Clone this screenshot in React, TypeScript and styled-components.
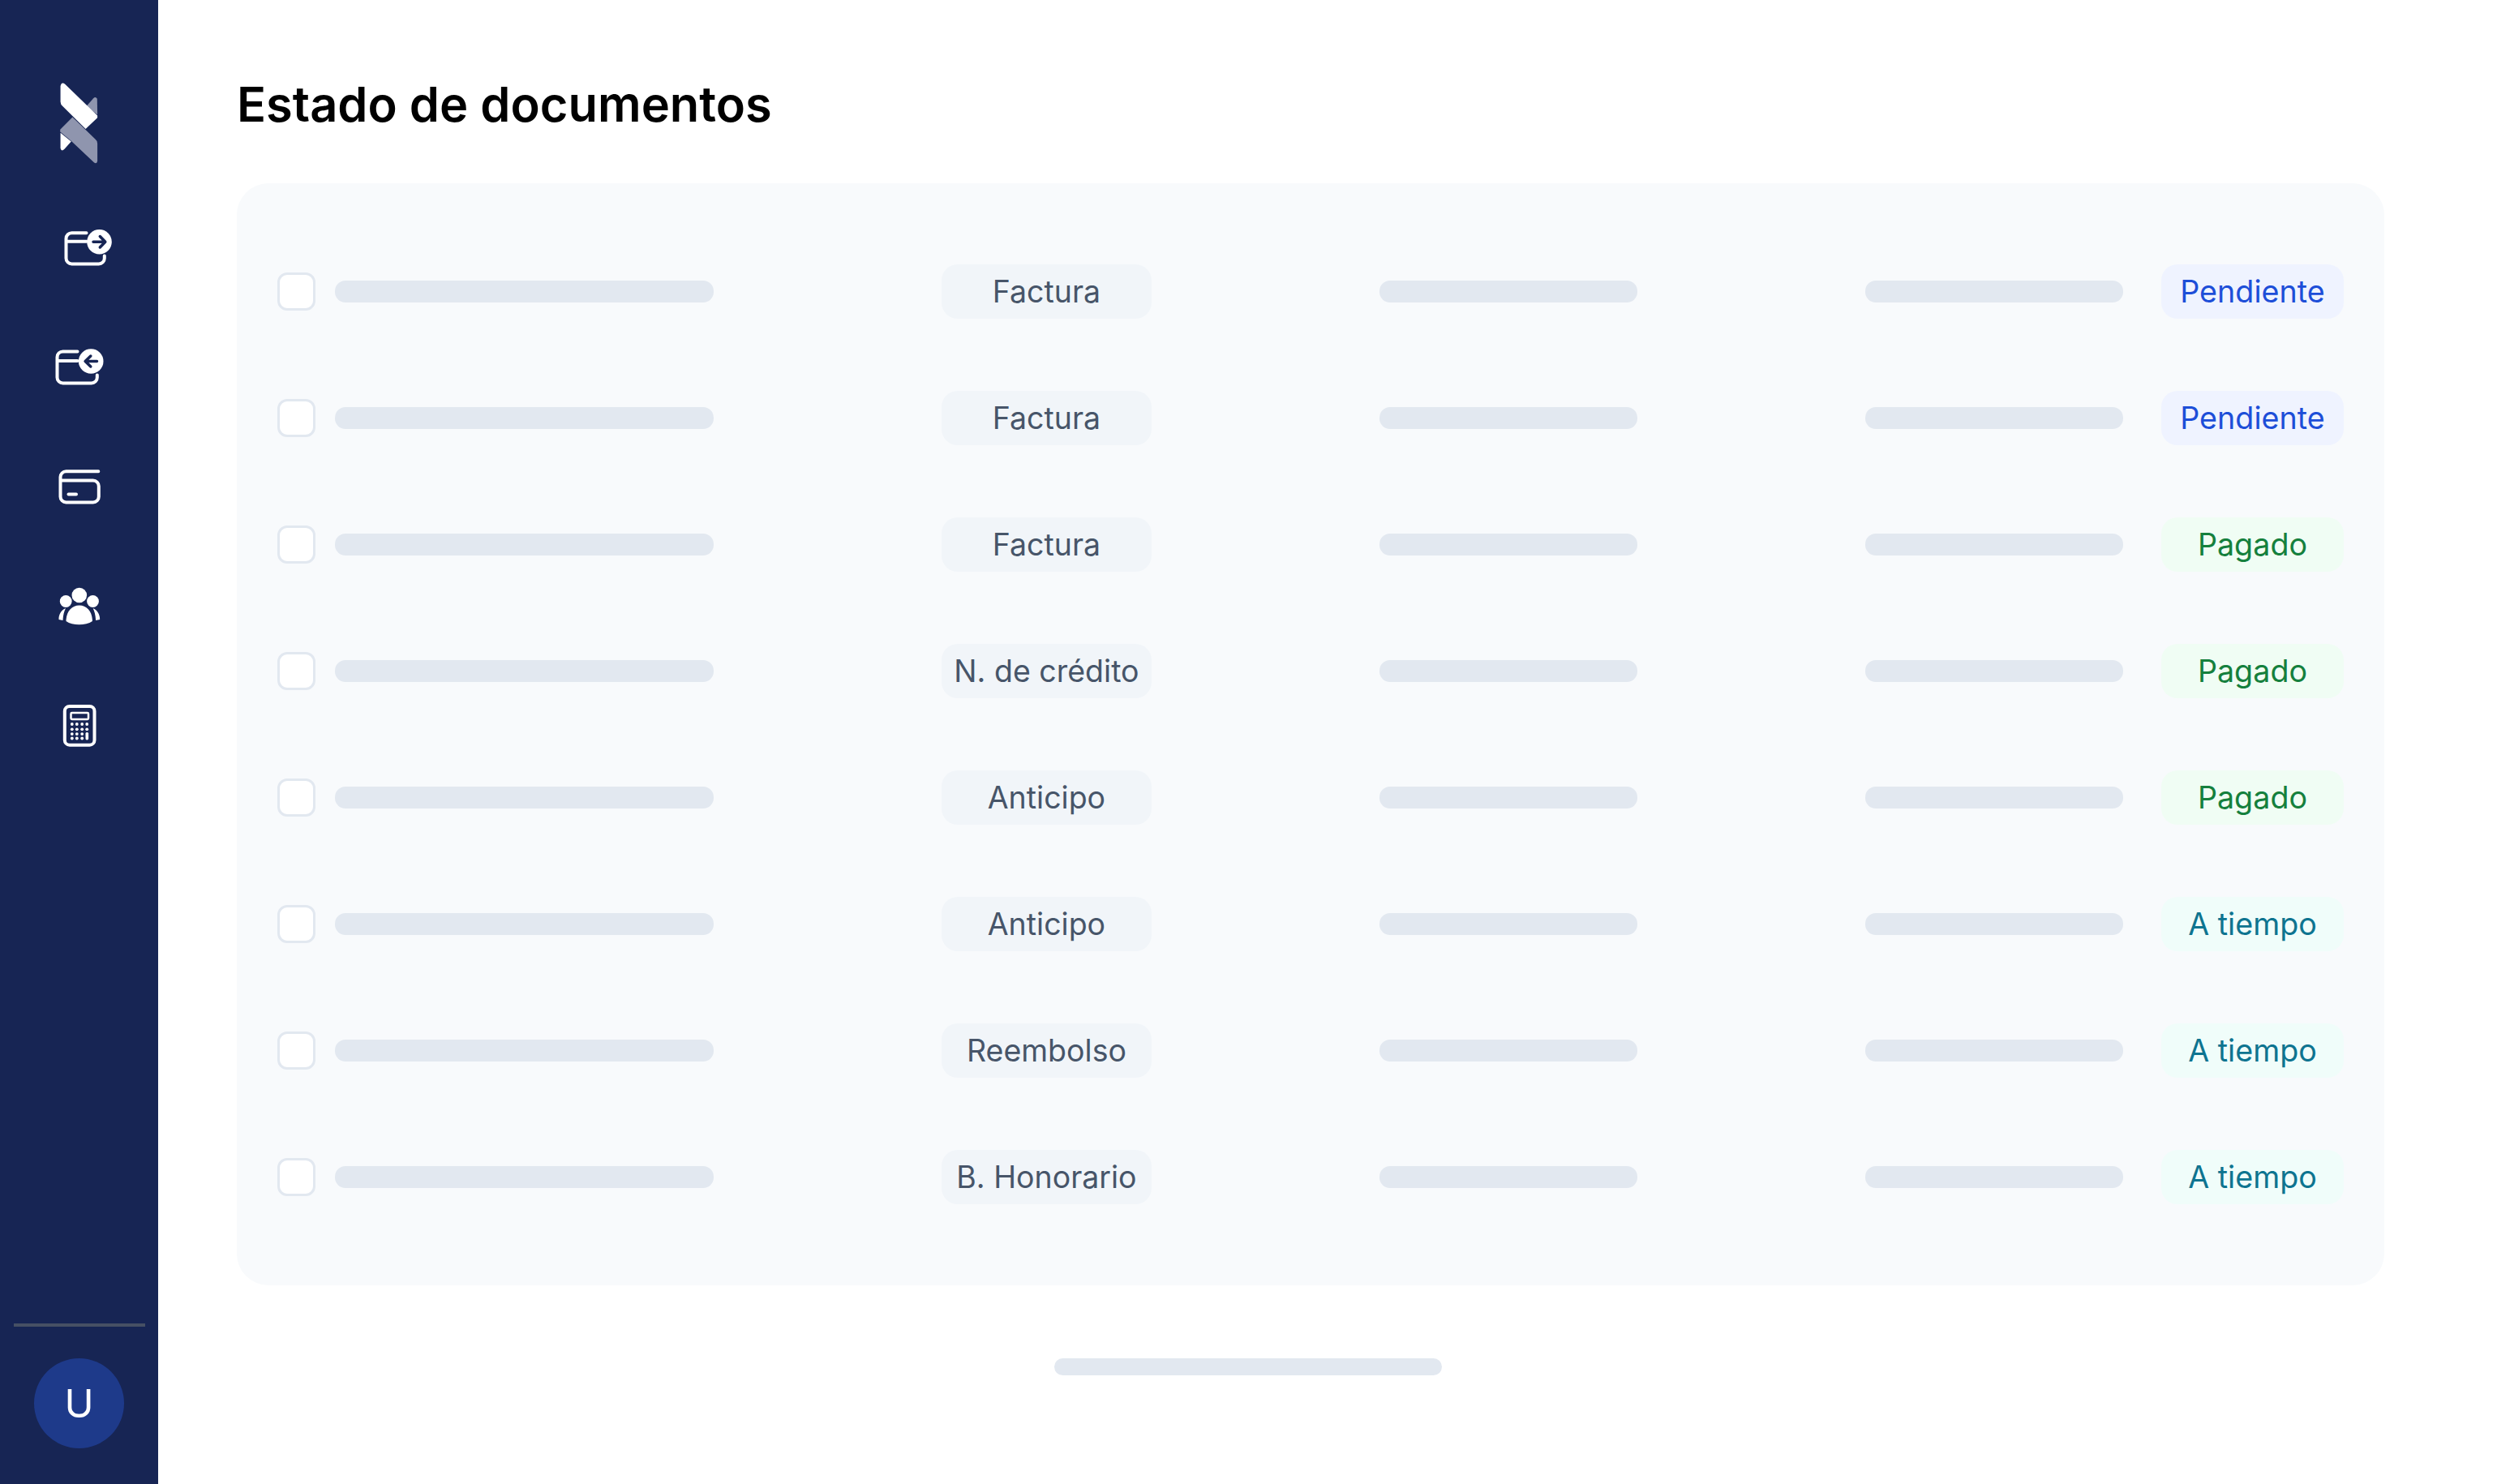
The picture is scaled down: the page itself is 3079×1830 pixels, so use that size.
import React from "react";
import styled, { createGlobalStyle } from "styled-components";

const Global = createGlobalStyle`
  html, body { margin: 0; padding: 0; background: #ffffff; }
  body { font-family: Inter, "Liberation Sans", sans-serif; }
`;

const Shell = styled.div`
  display: flex;
  width: 3079px;
  height: 1830px;
  overflow: hidden;
  background: #ffffff;
`;

const Sidebar = styled.aside`
  flex: 0 0 195px;
  display: flex;
  flex-direction: column;
  align-items: center;
  padding: 102px 0 44px;
  box-sizing: border-box;
  background: #172554;
`;

const Logo = styled.svg`
  display: block;
  width: 47px;
  height: 100px;
  margin-bottom: 70.5px;
`;

const Nav = styled.nav`
  display: flex;
  flex-direction: column;
  gap: 83.5px;
`;

const NavIcon = styled.svg`
  display: block;
  width: 80px;
  height: 64px;
`;

const SideFooter = styled.div`
  margin-top: auto;
  align-self: stretch;
  display: flex;
  flex-direction: column;
  align-items: center;
  gap: 39px;
`;

const Divider = styled.div`
  width: 162px;
  height: 4px;
  background: #465064;
`;

const Avatar = styled.div`
  width: 111px;
  height: 111px;
  border-radius: 50%;
  display: flex;
  align-items: center;
  justify-content: center;
  background: #1e3a8a;
  color: #ffffff;
  font-size: 48.5px;
  font-weight: 400;
`;

const Main = styled.main`
  flex: 1;
  min-width: 0;
  padding: 92px 139px 0 97px;
  box-sizing: border-box;
`;

const Title = styled.h1`
  margin: 0 0 62px;
  font-size: 59.6px;
  line-height: 72px;
  font-weight: 600;
  color: #000000;
`;

const Card = styled.section`
  display: flex;
  flex-direction: column;
  gap: 89px;
  padding: 100px 50px;
  border-radius: 39px;
  background: #f8fafc;
`;

const Row = styled.div`
  display: flex;
  align-items: center;
  justify-content: space-between;
  height: 67px;
`;

const Group = styled.div<{ $gap: number }>`
  display: flex;
  align-items: center;
  gap: ${(p) => p.$gap}px;
`;

const Checkbox = styled.span`
  width: 47px;
  height: 47px;
  box-sizing: border-box;
  border: 3.5px solid #e2e8f0;
  border-radius: 12px;
  background: #ffffff;
`;

const Bar = styled.span<{ $w: number }>`
  display: block;
  width: ${(p) => p.$w}px;
  height: 27px;
  border-radius: 13px;
  background: #e2e8f0;
`;

const Tag = styled.span`
  width: 259px;
  height: 67px;
  padding-bottom: 1px;
  box-sizing: border-box;
  display: flex;
  align-items: center;
  justify-content: center;
  border-radius: 20px;
  background: #f1f5f9;
  color: #475569;
  font-size: 37.5px;
  font-weight: 400;
`;

type Tone = "blue" | "green" | "teal";
const tones: Record<Tone, { bg: string; fg: string }> = {
  blue: { bg: "#eff3ff", fg: "#1d4ed8" },
  green: { bg: "#f0fdf4", fg: "#15803d" },
  teal: { bg: "#f0fdfa", fg: "#0e7490" },
};

const Status = styled.span<{ $tone: Tone }>`
  width: 225px;
  height: 67px;
  padding-bottom: 2px;
  box-sizing: border-box;
  display: flex;
  align-items: center;
  justify-content: center;
  border-radius: 20px;
  background: ${(p) => tones[p.$tone].bg};
  color: ${(p) => tones[p.$tone].fg};
  font-size: 37.7px;
  font-weight: 400;
`;

const Pagination = styled.div`
  width: 478px;
  height: 21px;
  margin: 90px 0 0 1008px;
  border-radius: 11px;
  background: #e2e8f0;
`;

const rows: { kind: string; status: string; tone: Tone }[] = [
  { kind: "Factura", status: "Pendiente", tone: "blue" },
  { kind: "Factura", status: "Pendiente", tone: "blue" },
  { kind: "Factura", status: "Pagado", tone: "green" },
  { kind: "N. de crédito", status: "Pagado", tone: "green" },
  { kind: "Anticipo", status: "Pagado", tone: "green" },
  { kind: "Anticipo", status: "A tiempo", tone: "teal" },
  { kind: "Reembolso", status: "A tiempo", tone: "teal" },
  { kind: "B. Honorario", status: "A tiempo", tone: "teal" },
];

const NAVY = "#172554";
const stroke = { fill: "none", stroke: "#fff", strokeWidth: 4, strokeLinecap: "round" as const, strokeLinejoin: "round" as const };
const arrow = { fill: "none", stroke: NAVY, strokeWidth: 3.5, strokeLinecap: "round" as const, strokeLinejoin: "round" as const };

const LogoMark = () => (
  <Logo viewBox="222 125 141 303">
    <path fill="#8f95ae" d="M320 213 L346 183 Q354 175 360 185 L361 245 Z" />
    <path fill="#fff" d="M223 312 L263 345 L238 373 Q226 384 223 370 Z" />
    <path fill="#8f95ae" d="M222 300 L268 254 L352 335 Q361 342 361 352 L361 418 Q358 430 348 423 L262 342 L222 308 Z" />
    <path fill="#fff" d="M223 138 Q226 120 240 130 L361 248 L361 256 L317 298 L232 214 Q223 206 223 196 Z" />
  </Logo>
);

const IconOut = () => (
  <NavIcon viewBox="57.5 272.5 80 64">
    <path {...stroke} d="M106 286.7 H88 a7 7 0 0 0 -7 7 V318 a7 7 0 0 0 7 7 H121.3 a7 7 0 0 0 7 -7 V315 M81 297.3 H106" />
    <circle cx="122" cy="297.7" r="15.3" fill="#fff" />
    <path {...arrow} d="M114.5 297.7 H129 M122.8 291 L129.3 297.7 L122.8 304.5" />
  </NavIcon>
);

const IconIn = () => (
  <NavIcon viewBox="57.5 420.5 80 64">
    <path {...stroke} d="M95 433.9 H77 a7 7 0 0 0 -7 7 V466 a7 7 0 0 0 7 7 H112.3 a7 7 0 0 0 7 -7 V463 M70 445.6 H95" />
    <circle cx="111.7" cy="446" r="15.3" fill="#fff" />
    <path {...arrow} d="M119 446 H105 M111.3 439.5 L104.6 446 L111.3 452.5" />
  </NavIcon>
);

const IconCard = () => (
  <NavIcon viewBox="57.5 567.5 80 64">
    <path {...stroke} d="M120.8 580.8 H81 a7 7 0 0 0 -7 7 V612 a7 7 0 0 0 7 7 H114.3 a7 7 0 0 0 7 -7 V599 a7 7 0 0 0 -7 -7 H74" />
    <path {...stroke} d="M84 609 H93.5" />
  </NavIcon>
);

const IconGroup = () => (
  <NavIcon viewBox="57.5 716 80 64" fill="#fff">
    <circle cx="97.3" cy="735" r="9.3" />
    <circle cx="80.7" cy="742.5" r="7.4" />
    <circle cx="114" cy="742.5" r="7.4" />
    <path d="M81 767 C81 755 88 747.5 97.3 747.5 C106.5 747.5 113.4 755 113.4 767 C105 772.8 89 772.8 81 767 Z" />
    <path d="M72 764 C72 759 75 753 80.5 751 C78.5 755 77.2 760 77 766 L72 765 Z" />
    <path d="M122.6 764 C122.6 759 119.6 753 114.1 751 C116.1 755 117.4 760 117.6 766 L122.6 765 Z" />
  </NavIcon>
);

const calcCols = [88.3, 94.3, 100.7];
const calcRows = [893, 899.3, 905.1, 910.5];

const IconCalc = () => (
  <NavIcon viewBox="57.5 863 80 64" fill="#fff">
    <rect x="79.3" y="871" width="36.7" height="47.7" rx="6" {...stroke} />
    <rect x="87" y="879" width="21.5" height="8" rx="1.2" fill="none" stroke="#fff" strokeWidth="2.5" />
    {calcCols.map((x) =>
      calcRows.map((y) => <circle key={`${x}-${y}`} cx={x} cy={y} r="1.9" />)
    )}
    <circle cx="106.7" cy="893" r="1.9" />
    <circle cx="106.7" cy="899.3" r="1.9" />
    <rect x="105" y="903" width="3.6" height="9.4" rx="1.6" />
  </NavIcon>
);

export default function App() {
  return (
    <>
      <Global />
      <Shell>
        <Sidebar>
          <LogoMark />
          <Nav>
            <IconOut />
            <IconIn />
            <IconCard />
            <IconGroup />
            <IconCalc />
          </Nav>
          <SideFooter>
            <Divider />
            <Avatar>U</Avatar>
          </SideFooter>
        </Sidebar>
        <Main>
          <Title>Estado de documentos</Title>
          <Card>
            {rows.map((r, i) => (
              <Row key={i}>
                <Group $gap={23.6}>
                  <Checkbox />
                  <Bar $w={467.3} />
                </Group>
                <Tag>{r.kind}</Tag>
                <Bar $w={318} />
                <Group $gap={47}>
                  <Bar $w={318} />
                  <Status $tone={r.tone}>{r.status}</Status>
                </Group>
              </Row>
            ))}
          </Card>
          <Pagination />
        </Main>
      </Shell>
    </>
  );
}
